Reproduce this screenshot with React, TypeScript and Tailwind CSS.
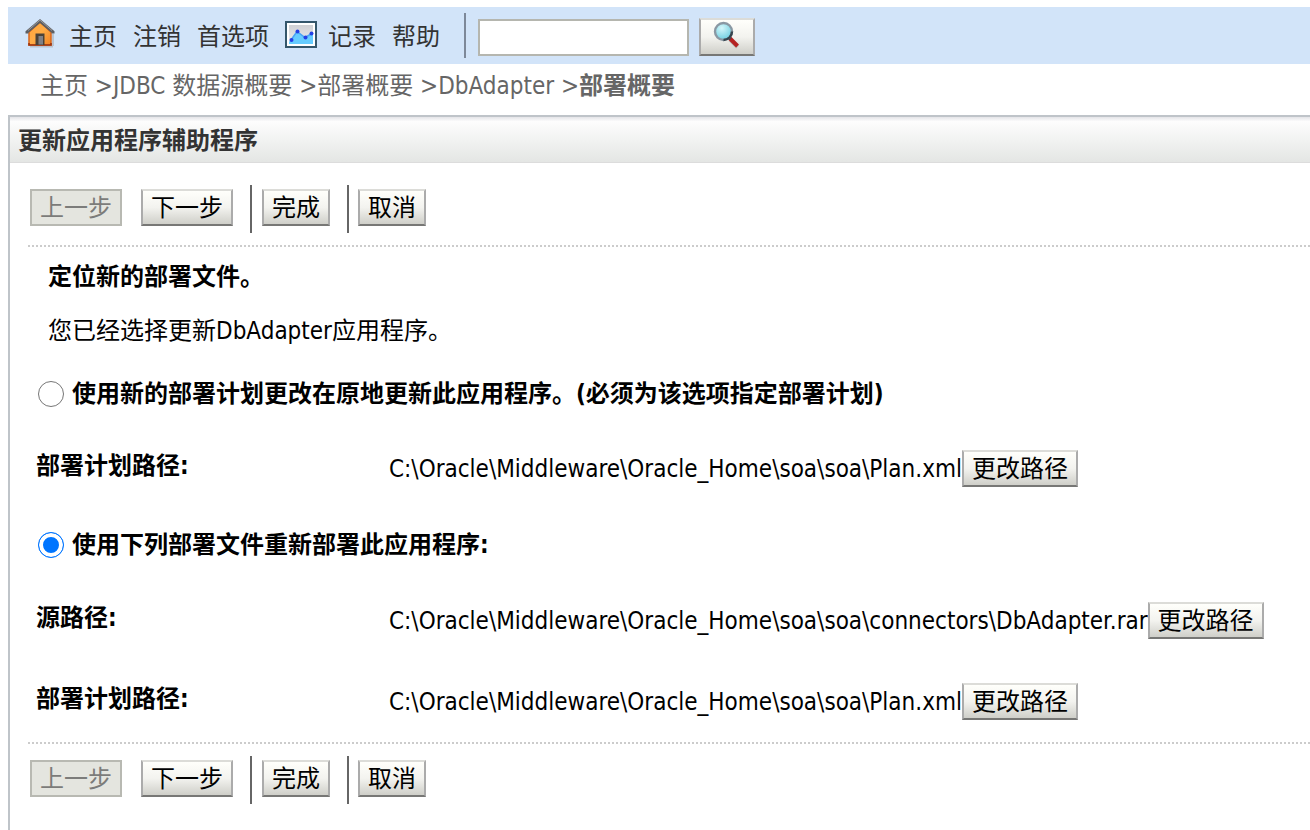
import React from "react";

function HomeIcon() {
  return (
    <svg width="30" height="30" viewBox="0 0 30 30" className="mb-[6px] shrink-0" aria-hidden="true">
      <defs>
        <linearGradient id="wall" x1="0" y1="0" x2="1" y2="1">
          <stop offset="0" stopColor="#ffa43c" />
          <stop offset=".5" stopColor="#ffac45" />
          <stop offset="1" stopColor="#f28322" />
        </linearGradient>
      </defs>
      <path d="M5 28.500h23M28 16v12" stroke="#a9b0b8" strokeWidth="2" opacity=".6" />
      <path d="M4 14 15 4l11 10v13H4z" fill="url(#wall)" stroke="#d9661b" strokeWidth="1.500" />
      <path d="M4 25v2h22v-2" fill="none" stroke="#9c3512" strokeWidth="1.600" />
      <path d="M10.500 27V15.500h9V27z" fill="#4a4238" />
      <path d="M13.500 26.500v-8.500h4.500v8.500z" fill="#7f8086" />
      <path d="M2 15.500V14L15 3l13 11v1.500" fill="none" stroke="#5d5e62" strokeWidth="3" />
      <path d="M3 12.500 15 2.200 27 12.500" fill="none" stroke="#9c9a98" strokeWidth="1" />
    </svg>
  );
}

function ChartIcon() {
  return (
    <svg width="32" height="27" viewBox="0 0 32 27" className="mb-1 shrink-0" aria-hidden="true">
      <defs>
        <linearGradient id="sky" x1="0" y1="0" x2="0" y2="1">
          <stop offset="0" stopColor="#cfd0d4" />
          <stop offset="1" stopColor="#efeff0" />
        </linearGradient>
      </defs>
      <rect x="1" y="1" width="30" height="25" fill="#fff" stroke="#34566b" strokeWidth="2" />
      <path d="M4 4h24v19H4z" fill="url(#sky)" />
      <path d="M4 21 12 10l8 7 8-5v11H4z" fill="#66ccff" />
      <path d="M6 19 12 10.500l8 6 7-4" fill="none" stroke="#4aa3f5" strokeWidth="1.500" />
      <g fill="#2340e6">
        <circle cx="6.500" cy="19" r="2" />
        <circle cx="12.500" cy="10.500" r="2" />
        <circle cx="20.500" cy="16.500" r="2" />
        <circle cx="26.500" cy="12.500" r="2" />
      </g>
    </svg>
  );
}

function SearchIcon() {
  return (
    <svg width="28" height="28" viewBox="0 0 28 28" aria-hidden="true">
      <defs>
        <radialGradient id="lens" cx=".4" cy=".3" r=".7">
          <stop offset="0" stopColor="#d5f7fb" />
          <stop offset="1" stopColor="#6fcfe0" />
        </radialGradient>
      </defs>
      <path d="m17 18.500 7.500 7.500" stroke="#b9b9b6" strokeWidth="4" />
      <path d="m16.500 17 8 8" stroke="#b52222" strokeWidth="4" />
      <path d="m14.500 15 3 3" stroke="#3f3f44" strokeWidth="3" />
      <circle cx="10.500" cy="10.500" r="8.500" fill="url(#lens)" stroke="#8a98a3" strokeWidth="2.400" />
      <path d="M19 10.500a8.500 8.500 0 0 1-8.500 8.500" fill="none" stroke="#34444d" strokeWidth="2.400" />
    </svg>
  );
}

const raised =
  "shrink-0 border-2 border-t-[#dcdcd8] border-x-[#ababab] border-b-[#777775] bg-linear-to-b from-[#fffffb] via-[#f3f3ef] to-[#cfcfc9]";

function Button({ children, disabled }: { children: React.ReactNode; disabled?: boolean }) {
  return (
    <button
      type="button"
      disabled={disabled}
      className={
        disabled
          ? "h-[37px] shrink-0 border-2 border-[#b8b9b2] bg-[#e4e5df] px-2 leading-8 whitespace-nowrap text-[#7c7c7a]"
          : `h-[37px] px-2 leading-8 whitespace-nowrap text-black ${raised}`
      }
    >
      {children}
    </button>
  );
}

function WizardButtons() {
  return (
    <div className="flex h-12 pl-5">
      <div className="flex items-start gap-[19px] pt-1 pr-[17px]">
        <Button disabled>上一步</Button>
        <Button>下一步</Button>
      </div>
      <div className="flex items-start border-l-2 border-[#666] pt-1 pr-[17px] pl-[10px]">
        <Button>完成</Button>
      </div>
      <div className="flex items-start border-l-2 border-[#666] pt-1 pl-[9px]">
        <Button>取消</Button>
      </div>
    </div>
  );
}

function PathRow({ label, path }: { label: string; path: string }) {
  return (
    <div className="grid grid-cols-[353px_1fr] pl-[26px]">
      <div className="leading-8 font-bold">{label}</div>
      <div className="flex items-center">
        <span className="leading-8 whitespace-nowrap">{path}</span>
        <Button>更改路径</Button>
      </div>
    </div>
  );
}

function Option({ label, checked }: { label: string; checked?: boolean }) {
  return (
    <label className="flex items-center gap-2 pl-7 leading-8 font-bold">
      <input
        type="radio"
        name="mode"
        defaultChecked={checked}
        className="size-[26px] shrink-0 appearance-none rounded-full border border-[#767676] bg-white checked:border-[#0075ff] checked:bg-[#0075ff] checked:shadow-[inset_0_0_0_4px_white]"
      />
      {label}
    </label>
  );
}

const crumbs = ["主页", "JDBC 数据源概要", "部署概要", "DbAdapter"];

export default function App() {
  return (
    <div
      lang="zh-CN"
      className="flex min-h-screen flex-col overflow-hidden bg-white pt-[7px] pl-2 font-['DejaVu_Sans_Condensed','Noto_Sans_CJK_SC',sans-serif] text-[24px] leading-8 text-black"
    >
      <header className="flex h-[57px] items-center bg-[#d2e4f9] pl-[17px] text-[#333]">
        <HomeIcon />
        <nav className="ml-[14px] flex items-center gap-4 pt-[2px] whitespace-nowrap">
          <a href="#home">主页</a>
          <a href="#logout">注销</a>
          <a href="#preferences">首选项</a>
          <a href="#record" className="flex items-center gap-[11px]">
            <ChartIcon />
            记录
          </a>
          <a href="#help">帮助</a>
        </nav>
        <form
          className="ml-6 flex h-[45px] items-center border-l-2 border-[#7d8899] pt-[3px] pl-3"
          onSubmit={(e) => e.preventDefault()}
        >
          <input
            type="text"
            aria-label="搜索"
            className="h-[37px] w-[211px] border-2 border-[#b5b6af] bg-white px-1"
          />
          <button
            type="submit"
            aria-label="搜索"
            className={`ml-[10px] flex h-[38px] w-14 items-center justify-center pb-1 ${raised}`}
          >
            <SearchIcon />
          </button>
        </form>
      </header>

      <nav className="flex h-[51px] pt-[6px] pl-8 whitespace-nowrap text-[#666]">
        {crumbs.map((c) => (
          <span key={c} className="whitespace-pre">
            <a href="#crumb">{c}</a>
            {" >"}
          </span>
        ))}
        <strong>部署概要</strong>
      </nav>

      <main className="flex-1 border-t-2 border-l-2 border-[#bfc4c9]">
        <h1 className="h-[46px] border-b border-[#dcdcdc] bg-linear-to-b from-[#e4e4e8] via-[#fdfdfd] via-10% to-[#e4e6e4] pt-2 pl-2 font-bold text-[#333]">
          更新应用程序辅助程序
        </h1>
        <div className="pt-[22px]">
          <WizardButtons />
          <div className="mt-3 ml-[18px] border-t-2 border-dotted border-[#ccc]" />
          <div className="flex flex-col pt-[14px] pb-[22px]">
            <h2 className="pl-[38px] font-bold">定位新的部署文件。</h2>
            <p className="mt-[22px] mb-[31px] pl-[38px]">您已经选择更新DbAdapter应用程序。</p>
            <Option label="使用新的部署计划更改在原地更新此应用程序。(必须为该选项指定部署计划)" />
            <div className="mt-10 mb-[42px]">
              <PathRow label="部署计划路径:" path="C:\Oracle\Middleware\Oracle_Home\soa\soa\Plan.xml" />
            </div>
            <Option label="使用下列部署文件重新部署此应用程序:" checked />
            <div className="mt-[41px] flex flex-col gap-11">
              <PathRow
                label="源路径:"
                path="C:\Oracle\Middleware\Oracle_Home\soa\soa\connectors\DbAdapter.rar"
              />
              <PathRow label="部署计划路径:" path="C:\Oracle\Middleware\Oracle_Home\soa\soa\Plan.xml" />
            </div>
          </div>
          <div className="mb-3 ml-[18px] border-t-2 border-dotted border-[#ccc]" />
          <WizardButtons />
        </div>
      </main>
    </div>
  );
}
